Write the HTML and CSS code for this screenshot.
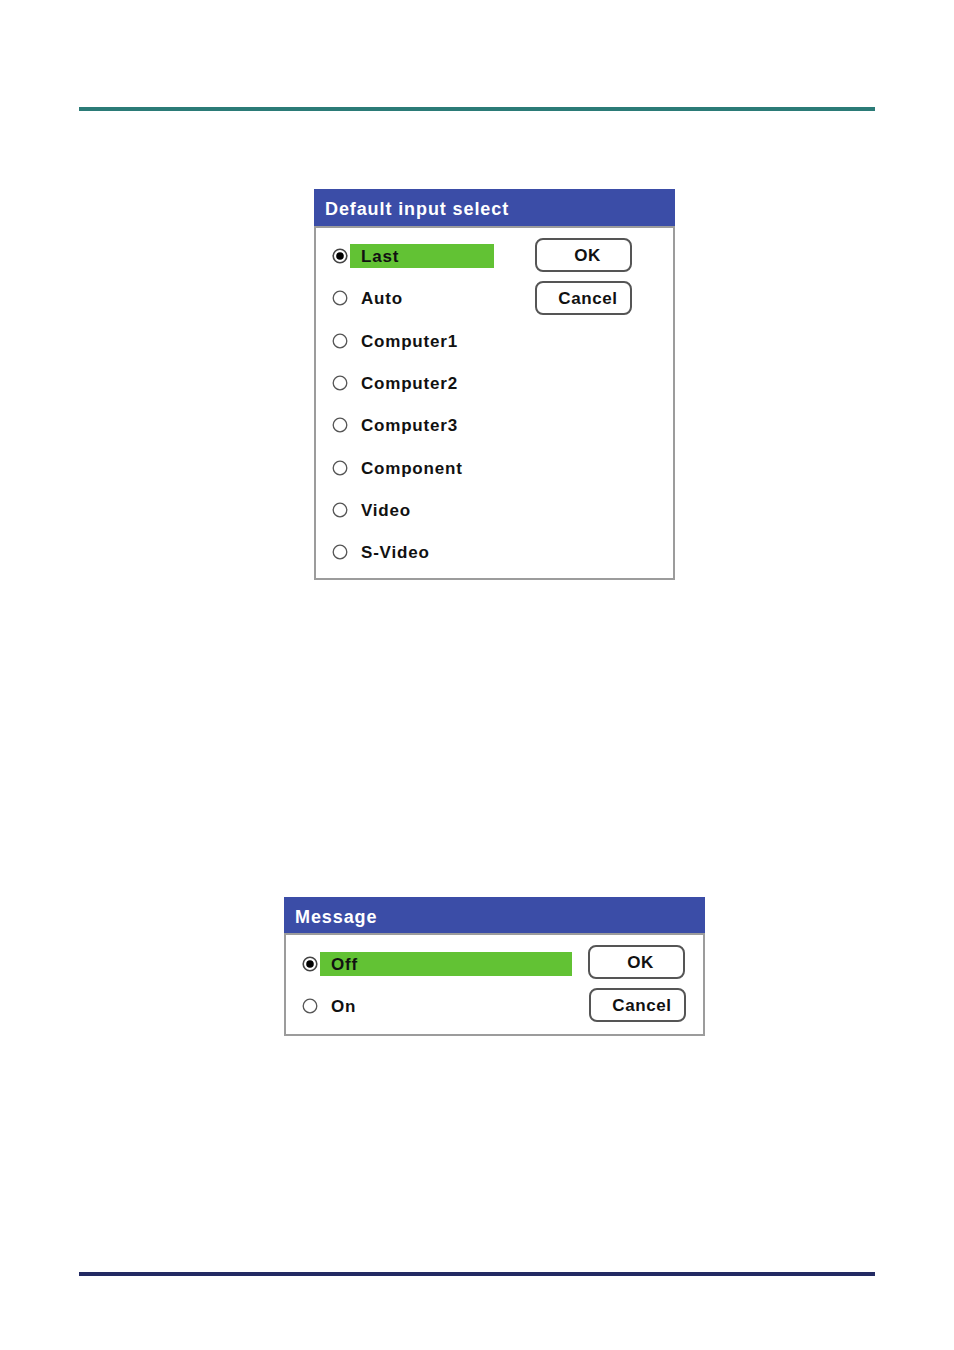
FILE: index.html
```html
<!DOCTYPE html>
<html>
<head>
<meta charset="utf-8">
<link rel="stylesheet" href="styles.css">
</head>
<body>
<div class="page">
  <div class="rule rule-top"></div>

  <div class="dialog dialog-input">
    <div class="dialog-title">Default input select</div>
    <div class="dialog-body">
      <ul class="options">
        <li class="option selected"><span class="radio"><svg width="16" height="16" viewBox="0 0 16 16"><circle cx="8" cy="8" r="6.8" fill="#fff" stroke="#444" stroke-width="1.6"/><circle cx="8" cy="8" r="3.8" fill="#000"/></svg></span><span class="label">Last</span></li>
        <li class="option"><span class="radio"><svg width="16" height="16" viewBox="0 0 16 16"><circle cx="8" cy="8" r="6.8" fill="#fff" stroke="#555" stroke-width="1.3"/></svg></span><span class="label">Auto</span></li>
        <li class="option"><span class="radio"><svg width="16" height="16" viewBox="0 0 16 16"><circle cx="8" cy="8" r="6.8" fill="#fff" stroke="#555" stroke-width="1.3"/></svg></span><span class="label">Computer1</span></li>
        <li class="option"><span class="radio"><svg width="16" height="16" viewBox="0 0 16 16"><circle cx="8" cy="8" r="6.8" fill="#fff" stroke="#555" stroke-width="1.3"/></svg></span><span class="label">Computer2</span></li>
        <li class="option"><span class="radio"><svg width="16" height="16" viewBox="0 0 16 16"><circle cx="8" cy="8" r="6.8" fill="#fff" stroke="#555" stroke-width="1.3"/></svg></span><span class="label">Computer3</span></li>
        <li class="option"><span class="radio"><svg width="16" height="16" viewBox="0 0 16 16"><circle cx="8" cy="8" r="6.8" fill="#fff" stroke="#555" stroke-width="1.3"/></svg></span><span class="label">Component</span></li>
        <li class="option"><span class="radio"><svg width="16" height="16" viewBox="0 0 16 16"><circle cx="8" cy="8" r="6.8" fill="#fff" stroke="#555" stroke-width="1.3"/></svg></span><span class="label">Video</span></li>
        <li class="option"><span class="radio"><svg width="16" height="16" viewBox="0 0 16 16"><circle cx="8" cy="8" r="6.8" fill="#fff" stroke="#555" stroke-width="1.3"/></svg></span><span class="label">S-Video</span></li>
      </ul>
      <div class="buttons">
        <div class="btn btn-ok">OK</div>
        <div class="btn btn-cancel">Cancel</div>
      </div>
    </div>
  </div>

  <div class="dialog dialog-message">
    <div class="dialog-title">Message</div>
    <div class="dialog-body">
      <ul class="options">
        <li class="option selected"><span class="radio"><svg width="16" height="16" viewBox="0 0 16 16"><circle cx="8" cy="8" r="6.8" fill="#fff" stroke="#444" stroke-width="1.6"/><circle cx="8" cy="8" r="3.8" fill="#000"/></svg></span><span class="label">Off</span></li>
        <li class="option"><span class="radio"><svg width="16" height="16" viewBox="0 0 16 16"><circle cx="8" cy="8" r="6.8" fill="#fff" stroke="#555" stroke-width="1.3"/></svg></span><span class="label">On</span></li>
      </ul>
      <div class="buttons">
        <div class="btn btn-ok">OK</div>
        <div class="btn btn-cancel btn-shift">Cancel</div>
      </div>
    </div>
  </div>

  <div class="rule rule-bottom"></div>
</div>
</body>
</html>
```

FILE: styles.css
```css
* { box-sizing: border-box; }
html, body { margin: 0; padding: 0; background: #fff; }
body { font-family: "Liberation Sans", Arial, sans-serif; }

.page {
  width: 954px;
  height: 1350px;
  padding: 107px 79px 0 79px;
}

.rule { height: 4px; width: 796px; }
.rule-top { background: #2b7b77; }
.rule-bottom { background: #232a63; margin-top: 236px; }

.dialog { display: flex; flex-direction: column; }
.dialog-input { width: 361px; margin-left: 235px; margin-top: 78px; }
.dialog-message { width: 421px; margin-left: 205px; margin-top: 317px; }

.dialog-title {
  background: #3b4da7;
  color: #fff;
  font-weight: bold;
  font-size: 18px;
  letter-spacing: 0.9px;
  height: 37px;
  line-height: 37px;
  padding: 2px 0 0 11px;
}
.dialog-message .dialog-title { height: 36px; line-height: 36px; }

.dialog-body {
  border: 2px solid #9c9c9c;
  display: flex;
  align-items: flex-start;
  padding: 7px 0 5px 17px;
}
.dialog-message .dialog-body { padding-bottom: 7px; }

.options { list-style: none; margin: 0; padding: 0; }
.option {
  display: flex;
  align-items: center;
  height: 42.3px;
}
.radio { width: 16px; height: 16px; display: flex; margin-left: -1px; margin-right: 2px; }
.label {
  font-weight: bold;
  font-size: 17px;
  letter-spacing: 0.8px;
  color: #111;
  height: 24px;
  line-height: 25px;
  padding-left: 11px;
}
.dialog-input .label { width: 144px; }
.dialog-message .label { width: 252px; }
.option.selected .label { background: #62c234; }

.buttons { display: flex; flex-direction: column; gap: 9px; padding-top: 3px; }
.dialog-input .buttons { margin-left: 41px; }
.dialog-message .buttons { margin-left: 16px; }

.btn {
  width: 97px;
  height: 34px;
  border: 2px solid #555;
  border-radius: 8px;
  font-weight: bold;
  font-size: 17px;
  letter-spacing: 0.6px;
  color: #111;
  display: flex;
  align-items: center;
  justify-content: center;
  padding-top: 1px;
}
.btn-ok { padding-left: 8px; }
.btn-cancel { padding-left: 9px; }
.btn-shift { margin-left: 1px; }
```
